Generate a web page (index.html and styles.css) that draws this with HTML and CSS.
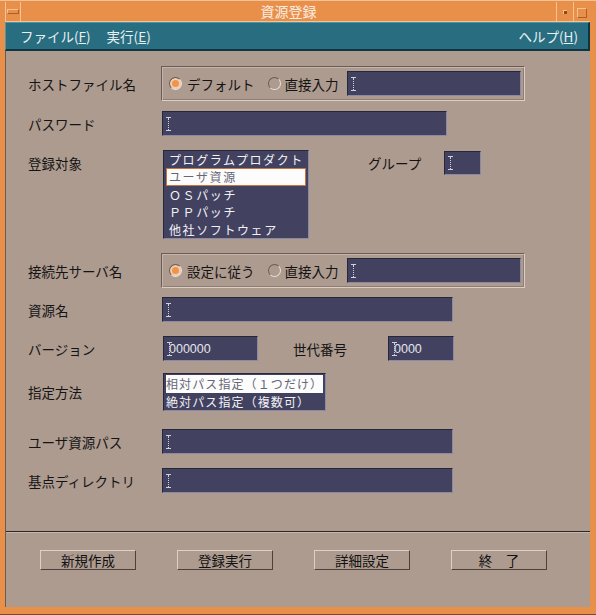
FILE: index.html
```html
<!DOCTYPE html>
<html lang="ja">
<head>
    <meta charset="UTF-8">
    <title>資源登録</title>
    <link rel="stylesheet" href="styles.css">
</head>
<body>

<div class="window">
    <div class="titlebar">
        <span class="tb-btn tb-menu"><span class="dash"></span></span>
        <span class="title">資源登録</span>
        <span class="tb-btn tb-min"><span class="dot"></span></span>
        <span class="tb-btn tb-max"><span class="box"></span></span>
    </div>

    <div class="menubar">
        <span class="menu-item">ファイル(<u>F</u>)</span>
        <span class="menu-item">実行(<u>E</u>)</span>
        <span class="menu-item help">ヘルプ(<u>H</u>)</span>
    </div>

    <div class="content">
        <div class="form">
            <!-- ホストファイル名 -->
            <div class="row r-host">
                <span class="label">ホストファイル名</span>
                <div class="radio-box">
                    <span class="radio on"></span><span class="radio-text">デフォルト</span>
                    <span class="radio"></span><span class="radio-text">直接入力</span>
                    <div class="field f-direct"><span class="ibeam"></span></div>
                </div>
            </div>

            <div class="row r-pass">
                <span class="label">パスワード</span>
                <div class="field f-pass"><span class="ibeam"></span></div>
            </div>

            <div class="row r-target">
                <span class="label top">登録対象</span>
                <ul class="listbox target-list">
                    <li>プログラムプロダクト</li>
                    <li class="selected framed">ユーザ資源</li>
                    <li>ＯＳパッチ</li>
                    <li>ＰＰパッチ</li>
                    <li>他社ソフトウェア</li>
                </ul>
                <span class="label group-label">グループ</span>
                <div class="field f-group"><span class="ibeam"></span></div>
            </div>

            <div class="row r-server">
                <span class="label">接続先サーバ名</span>
                <div class="radio-box">
                    <span class="radio on"></span><span class="radio-text">設定に従う</span>
                    <span class="radio"></span><span class="radio-text">直接入力</span>
                    <div class="field f-direct"><span class="ibeam"></span></div>
                </div>
            </div>

            <div class="row r-name">
                <span class="label">資源名</span>
                <div class="field f-wide"><span class="ibeam"></span></div>
            </div>

            <div class="row r-version">
                <span class="label">バージョン</span>
                <div class="field f-version"><span class="ibeam"></span><span class="value">000000</span></div>
                <span class="label gen-label">世代番号</span>
                <div class="field f-gen"><span class="ibeam"></span><span class="value">0000</span></div>
            </div>

            <div class="row r-method">
                <span class="label">指定方法</span>
                <ul class="listbox method-list">
                    <li class="selected">相対パス指定（１つだけ）</li>
                    <li>絶対パス指定（複数可）</li>
                </ul>
            </div>

            <div class="row r-path">
                <span class="label">ユーザ資源パス</span>
                <div class="field f-wide"><span class="ibeam"></span></div>
            </div>

            <div class="row r-base">
                <span class="label">基点ディレクトリ</span>
                <div class="field f-wide"><span class="ibeam"></span></div>
            </div>
        </div>

        <div class="separator"></div>

        <div class="buttons">
            <button class="btn">新規作成</button>
            <button class="btn">登録実行</button>
            <button class="btn">詳細設定</button>
            <button class="btn">終　了</button>
        </div>
    </div>
</div>

</body>
</html>
```

FILE: styles.css
```css
:root {
    --frame-orange: #e8904a;
    --frame-light: #f6c296;
    --frame-dark: #a85f28;
    --menu-teal: #286e80;
    --panel: #ae9b90;
    --panel-light: #dccdc5;
    --panel-dark: #6b5b52;
    --field: #424260;
    --field-dark: #27273a;
    --field-light: #8a8aa4;
}

body {
    margin: 0;
    background: var(--frame-orange);
    font-family: "Noto Sans CJK JP", "Noto Sans", sans-serif;
}

.window {
    width: 596px;
    height: 615px;
    box-sizing: border-box;
    padding: 2px 6px 7px 5px;
    background: var(--frame-orange);
    display: flex;
    flex-direction: column;
    border-top: 1px solid var(--frame-light);
    border-bottom: 1px solid #7a4a26;
}

/* title bar */

.titlebar {
    height: 20px;
    display: flex;
    margin-top: -1px;
    border-bottom: 1px solid var(--frame-light);
    box-sizing: border-box;
}

.tb-btn {
    display: flex;
    align-items: center;
    justify-content: center;
    box-sizing: border-box;
}

.tb-menu {
    width: 16px;
    border-left: 1px solid var(--frame-light);
    border-right: 1px solid var(--frame-light);
}

.tb-menu .dash {
    width: 10px;
    height: 3px;
    border: 1px solid var(--frame-light);
    border-right-color: var(--frame-dark);
    border-bottom-color: var(--frame-dark);
}

.title {
    flex: 1;
    text-align: center;
    color: #fcece0;
    font-size: 14px;
    line-height: 19px;
}

.tb-min {
    width: 18px;
    border-left: 1px solid var(--frame-light);
    border-right: 1px solid var(--frame-light);
}

.tb-min .dot {
    width: 3px;
    height: 3px;
    background: #8a4a1e;
    border-top: 1px solid var(--frame-light);
    border-left: 1px solid var(--frame-light);
}

.tb-max {
    width: 16px;
}

.tb-max .box {
    width: 10px;
    height: 10px;
    box-sizing: border-box;
    border: 1px solid var(--frame-light);
    border-right-color: var(--frame-dark);
    border-bottom-color: var(--frame-dark);
    margin-top: 2px;
}

/* menu bar */

.menubar {
    height: 29px;
    box-sizing: border-box;
    background: var(--menu-teal);
    border-top: 1px solid #4f95a6;
    border-left: 1px solid #4f95a6;
    border-bottom: 2px solid #0d3642;
    border-right: 2px solid #0d3642;
    display: flex;
    align-items: center;
    padding: 0 10px 0 14px;
    color: #e8f0f2;
    font-size: 13.5px;
}

.menu-item {
    margin-right: 16px;
}

.menu-item.help {
    margin-left: auto;
    margin-right: 0;
}

/* content */

.content {
    flex: 1;
    background: var(--panel);
    display: flex;
    flex-direction: column;
    border-left: 1px solid var(--panel-dark);
}

.form {
    flex: 1;
    padding-left: 22px;
}

.row {
    display: flex;
    align-items: center;
}

.label {
    width: 133px;
    flex: none;
    font-size: 13.5px;
    color: #141414;
    line-height: 20px;
}

.label.top {
    align-self: flex-start;
    padding-top: 3px;
}

.r-host { margin-top: 15px; }
.r-pass { margin-top: 10px; }
.r-target { margin-top: 14px; align-items: flex-start; }
.r-server { margin-top: 14px; }
.r-name { margin-top: 9px; }
.r-version { margin-top: 14px; }
.r-method { margin-top: 12px; }
.r-path { margin-top: 18px; }
.r-base { margin-top: 14px; }

/* radio group frame */

.radio-box {
    width: 364px;
    height: 35px;
    box-sizing: border-box;
    border: 1px solid;
    border-color: var(--panel-dark) var(--panel-light) var(--panel-light) var(--panel-dark);
    box-shadow: inset 1px 1px 0 #c4b4ab, inset -1px -1px 0 #8e7d73;
    display: flex;
    align-items: center;
    padding-left: 7px;
    font-size: 13.5px;
    color: #141414;
}

.radio {
    width: 13px;
    height: 13px;
    box-sizing: border-box;
    border-radius: 50%;
    border: 1px solid;
    border-color: var(--panel-dark) #ece2dc #ece2dc var(--panel-dark);
    flex: none;
}

.radio.on {
    background: #f0944a;
    box-shadow: inset 0 0 0 2px #ead0bc;
}

.radio-text {
    margin-left: 5px;
    margin-right: 13px;
}

.radio-box .radio-text:last-of-type {
    margin-left: 4px;
    margin-right: 8px;
}

/* text fields */

.field {
    height: 25px;
    box-sizing: border-box;
    background: var(--field);
    border: 1px solid;
    border-color: var(--field-dark) var(--field-light) var(--field-light) var(--field-dark);
    display: flex;
    align-items: center;
    padding-left: 3px;
    color: #e4e4ec;
    font-family: "Liberation Sans", sans-serif;
    font-size: 12.5px;
    flex: none;
}

.field .value {
    margin-left: -3px;
}

.ibeam {
    width: 5px;
    height: 14px;
    box-sizing: border-box;
    position: relative;
    border-top: 1px solid #cfd0dc;
    border-bottom: 1px solid #cfd0dc;
    flex: none;
}

.ibeam::after {
    content: "";
    position: absolute;
    left: 2px;
    top: 0;
    bottom: 0;
    border-left: 1px dotted #cfd0dc;
}

.f-direct { width: 174px; }
.f-pass { width: 285px; margin-left: 1px; }
.f-wide { width: 291px; margin-left: 1px; }
.f-version { width: 95px; margin-left: 2px; }
.f-gen { width: 66px; }
.f-group { width: 37px; height: 24px; margin-top: 1px; }

.group-label {
    width: auto;
    margin-left: 59px;
    margin-right: 23px;
    padding-top: 3px;
}

.gen-label {
    width: auto;
    margin-left: 35px;
    margin-right: 41px;
}

/* list boxes */

.listbox {
    list-style: none;
    margin: 0 0 0 2px;
    padding: 0 2px;
    background: var(--field);
    border: 1px solid;
    border-color: var(--field-dark) var(--field-light) var(--field-light) var(--field-dark);
    box-sizing: border-box;
    color: #f2f2f6;
    flex: none;
}

.target-list {
    width: 146px;
    height: 89px;
    font-size: 12px;
    letter-spacing: 1.6px;
}

.target-list li {
    height: 17.4px;
    line-height: 17.4px;
    padding-left: 3px;
    white-space: nowrap;
    box-sizing: border-box;
}

.method-list {
    width: 163px;
    height: 38px;
    padding-top: 1px;
    font-size: 12px;
    letter-spacing: 1.1px;
}

.method-list li {
    height: 17.5px;
    line-height: 17.5px;
    white-space: nowrap;
}

.listbox li.selected {
    background: #fcfcfc;
    color: #666674;
}

.listbox li.framed {
    border: 1px solid #c8743a;
    padding-left: 2px;
    line-height: 15.4px;
}

/* bottom */

.separator {
    height: 2px;
    box-sizing: border-box;
    border-top: 1px solid #2e2624;
    border-bottom: 1px solid #c6b6ad;
}

.buttons {
    height: 74px;
    box-sizing: border-box;
    padding: 17px 0 0 34px;
    display: flex;
    align-items: flex-start;
    gap: 41px;
}

.btn {
    width: 96px;
    height: 20px;
    padding: 0;
    background: var(--panel);
    border: 1px solid;
    border-color: #ded0c8 #4e403a #4e403a #ded0c8;
    font-family: "Noto Sans CJK JP", sans-serif;
    font-size: 13.5px;
    color: #111;
    line-height: 18px;
}
```
